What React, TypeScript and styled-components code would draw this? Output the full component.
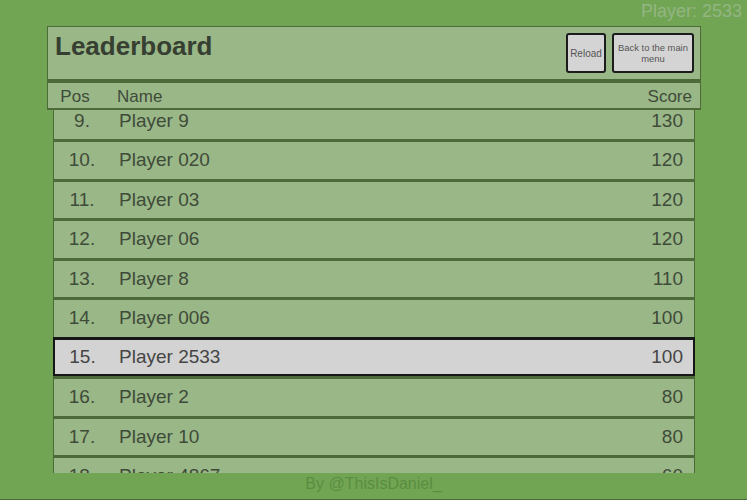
import React from "react";
import styled, { createGlobalStyle } from "styled-components";

const GREEN = "#71a553";
const PANEL = "#9ab788";
const DARK = "#4c6b38";
const TEXT = "#3f4b39";

const Global = createGlobalStyle`
  html, body { margin: 0; padding: 0; background: ${GREEN}; }
  body { font-family: "Liberation Sans", Arial, sans-serif; }
  * { box-sizing: border-box; }
`;

const Screen = styled.div`
  width: 747px;
  height: 500px;
  display: flex;
  flex-direction: column;
  overflow: hidden;
  background: ${GREEN};
  border-bottom: 1px solid ${DARK};
`;

const TopBar = styled.div`
  height: 26px;
  display: flex;
  justify-content: flex-end;
  padding-right: 5px;
  font-size: 18px;
  line-height: 22px;
  color: #93b583;
`;

const HeaderPanel = styled.div`
  margin-left: 47px;
  width: 654px;
  height: 57px;
  flex-shrink: 0;
  background: ${PANEL};
  border: 1px solid ${DARK};
  border-bottom-width: 4px;
  display: flex;
  justify-content: space-between;
  align-items: flex-start;
  padding: 0 6px 0 7px;
`;

const Title = styled.h1`
  margin: 4px 0 0;
  font-size: 26px;
  line-height: 30px;
  font-weight: bold;
  color: #363f31;
`;

const Buttons = styled.div`
  margin-top: 6px;
  display: flex;
  gap: 6px;
`;

const Button = styled.button<{ $w: number; $fs: number }>`
  width: ${(p) => p.$w}px;
  height: 40px;
  padding: 0 2px;
  background: #d4d4d4;
  border: 2px solid #1c1c1c;
  border-radius: 3px;
  font-family: "Liberation Sans", Arial, sans-serif;
  font-size: ${(p) => p.$fs}px;
  line-height: 11px;
  color: #555;
  display: flex;
  align-items: center;
  justify-content: center;
  text-align: center;
`;

const ColumnHeader = styled.div`
  margin-left: 47px;
  width: 654px;
  height: 27px;
  flex-shrink: 0;
  background: ${PANEL};
  border: 1px solid ${DARK};
  border-top: none;
  border-bottom-width: 2px;
  display: grid;
  grid-template-columns: 54px 1fr auto;
  align-items: center;
  padding-top: 2px;
  font-size: 17px;
  color: ${TEXT};
`;

const HeadPos = styled.span`
  text-align: center;
`;
const HeadName = styled.span`
  padding-left: 15px;
`;
const HeadScore = styled.span`
  padding-right: 8px;
`;

const Viewport = styled.div`
  margin-left: 53px;
  width: 642px;
  height: 363px;
  flex-shrink: 0;
  overflow: hidden;
`;

const Track = styled.div<{ $offset: number }>`
  margin-top: ${(p) => -p.$offset}px;
`;

const Row = styled.div<{ $me?: boolean }>`
  height: 39.5px;
  display: grid;
  grid-template-columns: ${(p) => (p.$me ? "55px" : "56px")} 1fr auto;
  align-items: center;
  font-size: 19px;
  background: ${(p) => (p.$me ? "#d3d3d3" : PANEL)};
  color: ${(p) => (p.$me ? "#454545" : TEXT)};
  border-style: solid;
  border-color: ${(p) => (p.$me ? "#161616" : DARK)};
  border-width: ${(p) => (p.$me ? "3px 2px 2px 2px" : "3px 1px 0 1px")};
`;

const Pos = styled.span`
  text-align: center;
`;
const Name = styled.span`
  padding-left: 9px;
`;
const Score = styled.span<{ $me?: boolean }>`
  padding-right: ${(p) => (p.$me ? "10px" : "11px")};
`;

const Footer = styled.div`
  flex: 1;
  text-align: center;
  font-size: 16px;
  line-height: 22px;
  color: #5b8d41;
`;

const rows: { pos: number; name: string; score: number }[] = [
  { pos: 9, name: "Player 9", score: 130 },
  { pos: 10, name: "Player 020", score: 120 },
  { pos: 11, name: "Player 03", score: 120 },
  { pos: 12, name: "Player 06", score: 120 },
  { pos: 13, name: "Player 8", score: 110 },
  { pos: 14, name: "Player 006", score: 100 },
  { pos: 15, name: "Player 2533", score: 100 },
  { pos: 16, name: "Player 2", score: 80 },
  { pos: 17, name: "Player 10", score: 80 },
  { pos: 18, name: "Player 4867", score: 60 },
];

const ME = "Player 2533";

export default function App() {
  return (
    <>
      <Global />
      <Screen>
        <TopBar>Player: 2533</TopBar>
        <HeaderPanel>
          <Title>Leaderboard</Title>
          <Buttons>
            <Button $w={40} $fs={10}>Reload</Button>
            <Button $w={82} $fs={9.4}>Back to the main menu</Button>
          </Buttons>
        </HeaderPanel>
        <ColumnHeader>
          <HeadPos>Pos</HeadPos>
          <HeadName>Name</HeadName>
          <HeadScore>Score</HeadScore>
        </ColumnHeader>
        <Viewport>
          <Track $offset={10.5}>
            {rows.map((r) => {
              const me = r.name === ME;
              return (
                <Row key={r.pos} $me={me}>
                  <Pos>{r.pos}.</Pos>
                  <Name>{r.name}</Name>
                  <Score $me={me}>{r.score}</Score>
                </Row>
              );
            })}
          </Track>
        </Viewport>
        <Footer>By @ThisIsDaniel_</Footer>
      </Screen>
    </>
  );
}
